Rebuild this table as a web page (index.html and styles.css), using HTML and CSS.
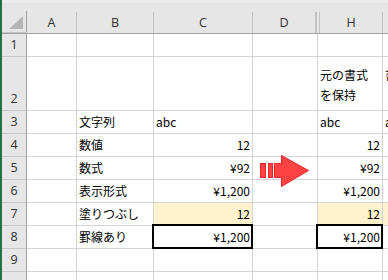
FILE: index.html
```html
<!DOCTYPE html>
<html lang="ja">
<head>
  <meta charset="UTF-8" />
  <title>書式の貼り付け</title>
  <link rel="stylesheet" href="styles.css">
</head>
<body>
  <div class="app">
    <div class="topbar"></div>
    <div class="sheet">
      <div class="row head">
        <div class="hc rh corner">
          <svg width="24" height="20" viewBox="0 0 24 20"><polygon points="7,16 21,16 21,3" fill="#b5b5b5"/></svg>
        </div>
        <div class="hc ca">A</div>
        <div class="hc cb">B</div>
        <div class="hc cc">C</div>
        <div class="hc cd-h">D</div>
        <div class="hc hidden-cols"></div>
        <div class="hc ch-h">H</div>
        <div class="hc ci"></div>
      </div>

      <div class="row">
        <div class="rh">1</div>
        <div class="cell ca"></div><div class="cell cb"></div><div class="cell cc"></div>
        <div class="cell cd"></div><div class="cell ch"></div><div class="cell ci"></div>
      </div>
      <div class="row tall">
        <div class="rh">2</div>
        <div class="cell ca"></div><div class="cell cb"></div><div class="cell cc"></div>
        <div class="cell cd"></div>
        <div class="cell ch wrap">元の書式<br>を保持</div>
        <div class="cell ci wrap single">書式のみ</div>
      </div>
      <div class="row">
        <div class="rh">3</div>
        <div class="cell ca"></div><div class="cell cb">文字列</div><div class="cell cc">abc</div>
        <div class="cell cd"></div><div class="cell ch">abc</div><div class="cell ci">abc</div>
      </div>
      <div class="row">
        <div class="rh">4</div>
        <div class="cell ca"></div><div class="cell cb">数値</div><div class="cell cc num">12</div>
        <div class="cell cd"></div><div class="cell ch num">12</div><div class="cell ci"></div>
      </div>
      <div class="row">
        <div class="rh">5</div>
        <div class="cell ca"></div><div class="cell cb">数式</div><div class="cell cc num">¥92</div>
        <div class="cell cd"></div><div class="cell ch num">¥92</div><div class="cell ci"></div>
      </div>
      <div class="row">
        <div class="rh">6</div>
        <div class="cell ca"></div><div class="cell cb">表示形式</div><div class="cell cc num">¥1,200</div>
        <div class="cell cd"></div><div class="cell ch num">¥1,200</div><div class="cell ci"></div>
      </div>
      <div class="row">
        <div class="rh">7</div>
        <div class="cell ca"></div><div class="cell cb">塗りつぶし</div><div class="cell cc num fill">12</div>
        <div class="cell cd"></div><div class="cell ch num fill">12</div><div class="cell ci fill"></div>
      </div>
      <div class="row">
        <div class="rh">8</div>
        <div class="cell ca"></div><div class="cell cb">罫線あり</div><div class="cell cc num boxed">¥1,200</div>
        <div class="cell cd"></div><div class="cell ch num boxed">¥1,200</div><div class="cell ci"></div>
      </div>
      <div class="row">
        <div class="rh">9</div>
        <div class="cell ca"></div><div class="cell cb"></div><div class="cell cc"></div>
        <div class="cell cd"></div><div class="cell ch"></div><div class="cell ci"></div>
      </div>
      <div class="row">
        <div class="rh"></div>
        <div class="cell ca"></div><div class="cell cb"></div><div class="cell cc"></div>
        <div class="cell cd"></div><div class="cell ch"></div><div class="cell ci"></div>
      </div>
    </div>

    <!-- striped block arrow drawn over column D -->
    <svg class="arrow" width="50" height="33" viewBox="0 0 50 33">
      <g fill="#ff4343" stroke="#e8262a" stroke-width="1">
        <rect x="0.5" y="8.5" width="5" height="14"/>
        <rect x="8.5" y="8.5" width="4" height="14"/>
        <polygon points="14.5,8.5 21.5,8.5 21.5,0.5 48.5,15.5 21.5,31.5 21.5,22.5 14.5,22.5"/>
      </g>
    </svg>
  </div>
</body>
</html>
```

FILE: styles.css
```css
html, body {
  margin: 0;
  overflow: hidden;
  background: #fff;
}
.app {
  position: relative;
  width: 388px;
  height: 280px;
  overflow: hidden;
  border-left: 2px solid #217346;
  box-sizing: border-box;
  font-family: "Noto Sans CJK JP", "Noto Sans", sans-serif;
  font-size: 12px;
  color: #000;
}
.topbar {
  height: 3px;
  background: #ececec;
}
.sheet {
  width: 420px;
}
.row {
  display: flex;
  height: 23px;
}
.row.tall {
  height: 54px;
}
.row.head {
  height: 30px;
  background: #e6e6e6;
  border-bottom: 1px solid #a0a0a0;
  align-items: flex-end;
  box-sizing: content-box;
}
.hc {
  box-sizing: border-box;
  height: 21px;
  line-height: 21px;
  border-right: 1px solid #c2c2c2;
  text-align: center;
  color: #333;
  font-family: "Open Sans", "Noto Sans", sans-serif;
  font-size: 12.5px;
  flex: none;
}
.hc.corner {
  height: 30px;
  border-right: none;
  position: relative;
}
.hc.corner::after {
  content: '';
  position: absolute;
  right: 0;
  bottom: 0;
  height: 21px;
  border-right: 1px solid #a0a0a0;
}
.hc.corner svg {
  display: block;
  margin-top: 10px;
}
.rh {
  flex: none;
  box-sizing: border-box;
  width: 25px;
  background: #e6e6e6;
  border-right: 1px solid #a0a0a0;
  border-bottom: 1px solid #c6c6c6;
  color: #333;
  text-align: center;
  font-family: "Open Sans", "Noto Sans", sans-serif;
  font-size: 12.5px;
  line-height: 22px;
}
.row.tall .rh {
  display: flex;
  align-items: flex-end;
  justify-content: center;
}
.cell {
  flex: none;
  box-sizing: border-box;
  border-right: 1px solid #d4d4d4;
  border-bottom: 1px solid #d4d4d4;
  padding: 0 2px;
  line-height: 22px;
  white-space: nowrap;
}
.ca { width: 50px; }
.cb { width: 77px; }
.cc { width: 99px; }
.cd { width: 65px; }
.ch { width: 65px; }
.ci { width: 60px; }
.cd-h { width: 63px; }
.hidden-cols { width: 4px; border-left: 1px solid #c2c2c2; }
.ch-h { width: 63px; }
.num {
  text-align: right;
}
.wrap {
  display: flex;
  flex-direction: column;
  justify-content: flex-end;
  line-height: 20px;
  padding-bottom: 5px;
}
.wrap.single {
  padding-bottom: 25px;
}
.fill {
  background: #fff2cc;
}
.boxed {
  position: relative;
}
.boxed::after {
  content: '';
  position: absolute;
  left: -2px;
  top: -2px;
  right: -1px;
  bottom: -1px;
  border: 2px solid #000;
}
.arrow {
  position: absolute;
  left: 258px;
  top: 155px;
}
```
